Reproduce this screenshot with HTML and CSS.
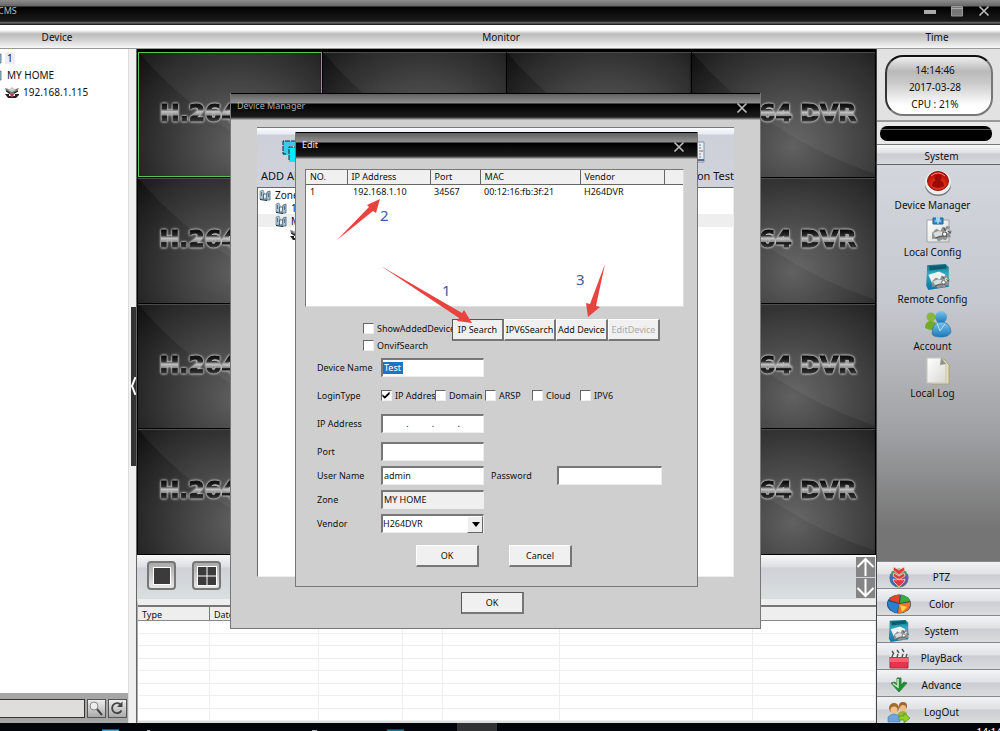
FILE: index.html
```html
<!DOCTYPE html>
<html lang="en">
<head>
<meta charset="utf-8">
<title>CMS</title>
<link rel="stylesheet" href="styles.css">
</head>
<body>
<svg class="defs" aria-hidden="true">
  <defs>
    <linearGradient id="chrome" x1="0" y1="0" x2="0" y2="1">
      <stop offset="0.2" stop-color="#0c0c0c"/><stop offset="0.36" stop-color="#2a2a2a"/>
      <stop offset="0.46" stop-color="#c4c4c4"/><stop offset="0.58" stop-color="#8a8a8a"/>
      <stop offset="0.62" stop-color="#141414"/><stop offset="0.8" stop-color="#3a3a3a"/>
    </linearGradient>
    <linearGradient id="teal" x1="0" y1="0" x2="0" y2="1">
      <stop offset="0" stop-color="#0f6f86"/><stop offset="0.35" stop-color="#2fa9bf"/><stop offset="1" stop-color="#1273a0"/>
    </linearGradient>
    <linearGradient id="blue" x1="0" y1="0" x2="0" y2="1">
      <stop offset="0" stop-color="#7cc4ea"/><stop offset="1" stop-color="#1c78b8"/>
    </linearGradient>
    <linearGradient id="paper" x1="0" y1="0" x2="1" y2="1">
      <stop offset="0" stop-color="#fff"/><stop offset="1" stop-color="#d8d8d2"/>
    </linearGradient>
    <radialGradient id="red" cx="0.5" cy="0.7" r="0.6">
      <stop offset="0" stop-color="#ff4a28"/><stop offset="1" stop-color="#b80c04"/>
    </radialGradient>
    <symbol id="x" viewBox="0 0 12 12"><path d="M1.5 1.5 10.500 10.500M10.500 1.500 1.500 10.500" stroke="#b9b9b9" stroke-width="1.700"/></symbol>
    <symbol id="gear" viewBox="0 0 20 16">
      <path d="M1 8 5 4 9 6 11 2 14 3 15 1 18 2 17 5 20 6 18 9 19 12 16 12 14 15 11 14 7 16 5 13 1 14Z" fill="#8f9193"/>
      <path d="M2 8 7 6 12 7 16 4 18 6 14 10 8 11 4 12Z" fill="#d9dbdc"/>
      <path d="M4 13 9 11 15 11M12 3 14 6M16 6 19 8" stroke="#4e5152" fill="none"/>
      <circle cx="13" cy="9" r="2" fill="#fff" stroke="#666"/>
    </symbol>
    <symbol id="system" viewBox="0 0 26 26">
      <path d="M3 2 20 1 23 4V22L4 25 2 21Z" fill="url(#teal)"/>
      <path d="M5 3 20 2 21 5 5 7Z" fill="#0b5d72"/>
      <path d="M4 11 14 8 20 11 21 17 8 20Z" fill="#eef2f3"/>
      <use href="#gear" x="6" y="10" width="19" height="14"/>
    </symbol>
    <symbol id="building" viewBox="0 0 12 12">
      <path d="M1 2 4 1 5 3V10H1Z" fill="#a9c3d2" stroke="#6a8799" stroke-width=".7"/>
      <path d="M4.500 5H8V10H4.500Z" fill="#e8f2f6" stroke="#344e5d" stroke-width=".8"/>
      <path d="M8 3 11 2V11H7Z" fill="#a3c2d4" stroke="#4a6678" stroke-width=".8"/>
      <path d="M2 4h1M2 6h1M9 5h1M9 7h1M1 10.500 8 11.500" stroke="#152c3a"/>
    </symbol>
    <symbol id="camera" viewBox="0 0 14 12">
      <path d="M0 2 7 4 14 2 12 6 9 8H4L1 5Z" fill="#777"/>
      <path d="M3 4 7 1 11 4 7 6Z" fill="#ccc"/><path d="M1 5 5 7M13 5 9 7" stroke="#111"/>
      <path d="M0 8H4V10H10V8H14V9L11 12H3Z" fill="#222"/><path d="M5 8H9L8 11H6Z" fill="#b84040"/>
    </symbol>
    <symbol id="dvr" viewBox="0 0 184 125">
      <path d="M0 0Q72 84 184 122V0Z" fill="#fff" opacity=".05"/>
      <text x="21" y="69" class="dvr-text">H.264 DVR</text>
    </symbol>
  </defs>
</svg>

<div class="app">
  <header class="titlebar main-title">
    <h1 class="app-name">CMS</h1>
    <div class="window-buttons">
      <button class="icon-button" aria-label="Minimize"><svg width="12" height="12"><path d="M0 5H12V9H0Z" fill="#aaa"/></svg></button>
      <button class="icon-button" aria-label="Maximize"><svg width="12" height="12"><path d="M.5 1.500H11.500V11H.5Z" fill="#777" stroke="#999"/><path d="M0 3.500H12" stroke="#aaa"/></svg></button>
      <button class="icon-button" aria-label="Close"><svg width="12" height="12"><use href="#x"/></svg></button>
    </div>
  </header>
  <div class="headings"><div class="h-device">Device</div><div class="h-monitor">Monitor</div><div class="h-time">Time</div></div>

  <div class="workspace">
    <aside class="devices">
      <ul class="tree">
        <li><svg class="i12"><use href="#building"/></svg><span class="picked">1</span></li>
        <li><svg class="i12"><use href="#building"/></svg><span>MY HOME</span></li>
        <li class="child"><svg class="i14"><use href="#camera"/></svg><span>192.168.1.115</span></li>
      </ul>
      <div class="finder">
        <input type="text" class="find-input" aria-label="Search devices">
        <button class="find-button" aria-label="Search"><svg width="16" height="16"><path d="M8.500 8.500 14 15" stroke="#444" stroke-width="2"/><circle cx="6" cy="6" r="4" fill="#eee" stroke="#888"/></svg></button>
        <button class="find-button" aria-label="Refresh"><svg width="16" height="16"><path d="M12 5A5 5 0 1 0 12.500 10.500" fill="none" stroke="#444" stroke-width="1.800"/><path d="M13.500 1.500V7H8Z" fill="#444"/></svg></button>
      </div>
    </aside>
    <div class="splitter"><button class="handle" aria-label="Collapse"><svg width="5" height="20"><path d="M4.500 1 1 10 4.500 19" fill="none" stroke="#fff" stroke-width="2"/></svg></button></div>

    <main class="monitor">
      <div class="videos">
        <div class="video active"><svg viewBox="0 0 184 125"><use href="#dvr"/></svg></div>
        <div class="video"><svg viewBox="0 0 184 125"><use href="#dvr"/></svg></div>
        <div class="video"><svg viewBox="0 0 184 125"><use href="#dvr"/></svg></div>
        <div class="video"><svg viewBox="0 0 184 125"><use href="#dvr"/></svg></div>
        <div class="video"><svg viewBox="0 0 184 125"><use href="#dvr"/></svg></div>
        <div class="video"><svg viewBox="0 0 184 125"><use href="#dvr"/></svg></div>
        <div class="video"><svg viewBox="0 0 184 125"><use href="#dvr"/></svg></div>
        <div class="video"><svg viewBox="0 0 184 125"><use href="#dvr"/></svg></div>
        <div class="video"><svg viewBox="0 0 184 125"><use href="#dvr"/></svg></div>
        <div class="video"><svg viewBox="0 0 184 125"><use href="#dvr"/></svg></div>
        <div class="video"><svg viewBox="0 0 184 125"><use href="#dvr"/></svg></div>
        <div class="video"><svg viewBox="0 0 184 125"><use href="#dvr"/></svg></div>
        <div class="video"><svg viewBox="0 0 184 125"><use href="#dvr"/></svg></div>
        <div class="video"><svg viewBox="0 0 184 125"><use href="#dvr"/></svg></div>
        <div class="video"><svg viewBox="0 0 184 125"><use href="#dvr"/></svg></div>
        <div class="video"><svg viewBox="0 0 184 125"><use href="#dvr"/></svg></div>
      </div>
      <div class="layoutbar">
        <button class="layout-button" aria-label="Single view"><svg width="20" height="20"><path d="M1 1H19V19H1Z" fill="#fff"/><path d="M2 2H18V18H2Z" fill="#3b3b3b"/></svg></button>
        <button class="layout-button" aria-label="Four views"><svg width="20" height="20"><path d="M0 0H20V20H0Z" fill="#fff"/><path d="M1 1H9.500V9.500H1ZM10.500 1H19V9.500H10.500ZM1 10.500H9.500V19H1ZM10.500 10.500H19V19H10.500Z" fill="#3b3b3b"/></svg></button>
        <div class="pager">
          <button class="page-button" aria-label="Previous page"><svg width="19" height="20"><path d="M9.500 2V19M1.500 10 9.500 2 17.500 10" fill="none" stroke="#fff" stroke-width="2"/></svg></button>
          <button class="page-button" aria-label="Next page"><svg width="19" height="20"><path d="M9.500 1V18M1.500 10 9.500 18 17.500 10" fill="none" stroke="#fff" stroke-width="2"/></svg></button>
        </div>
      </div>
      <table class="log">
        <colgroup><col class="c72"><col class="c109"><col class="c84"><col class="c40"><col class="c117"><col class="c193"><col></colgroup>
        <thead><tr><th>Type</th><th>Date</th><th></th><th></th><th></th><th></th><th></th></tr></thead>
        <tbody>
          <tr><td></td><td></td><td></td><td></td><td></td><td></td><td></td></tr>
          <tr><td></td><td></td><td></td><td></td><td></td><td></td><td></td></tr>
          <tr><td></td><td></td><td></td><td></td><td></td><td></td><td></td></tr>
          <tr><td></td><td></td><td></td><td></td><td></td><td></td><td></td></tr>
          <tr><td></td><td></td><td></td><td></td><td></td><td></td><td></td></tr>
          <tr><td></td><td></td><td></td><td></td><td></td><td></td><td></td></tr>
          <tr><td></td><td></td><td></td><td></td><td></td><td></td><td></td></tr>
          <tr><td></td><td></td><td></td><td></td><td></td><td></td><td></td></tr>
        </tbody>
      </table>
    </main>

    <aside class="side">
      <div class="clock-wrap"><div class="clock"><span>14:14:46</span><span>2017-03-28</span><span>CPU : 21%</span></div></div>
      <div class="pill-wrap"><div class="pill"></div></div>
      <h2 class="side-title">System</h2>
      <nav class="tools">
        <button class="tool"><svg width="28" height="28" viewBox="0 0 28 28"><ellipse cx="14" cy="16" rx="13" ry="11" fill="#77797c"/><ellipse cx="14" cy="13.500" rx="13" ry="12" fill="#eee"/><ellipse cx="14" cy="12" rx="10.500" ry="9.500" fill="url(#red)" stroke="#8c1610"/><circle cx="14" cy="8.500" r="3.500" fill="#9c0b05"/><path d="M8 17Q8 11 14 11T20 17Q14 21 8 17Z" fill="#9c0b05"/><path d="M7 7Q14 1 21 7" fill="none" stroke="#ef8d7d"/></svg>Device Manager</button>
        <button class="tool"><svg width="28" height="28" viewBox="0 0 28 28"><path d="M3 4H25V26H3Z" fill="url(#paper)" stroke="#a1a4a8"/><path d="M9 2H19V8H9Z" fill="#3d8cc8" stroke="#1c5e92"/><path d="M12 1H16V4H12Z" fill="#9bd4ef"/><path d="M11 5H17M14 3V8" stroke="#d1efff"/><use href="#gear" x="7" y="8" width="21" height="18"/></svg>Local Config</button>
        <button class="tool"><svg width="28" height="28"><use href="#system"/></svg>Remote Config</button>
        <button class="tool"><svg width="28" height="28" viewBox="0 0 28 28"><circle cx="7" cy="7" r="4.500" fill="#8ab739"/><path d="M1 18Q1 11 7 11T13 18Q8 22 1 18Z" fill="#72aa2c"/><circle cx="17" cy="7" r="6" fill="url(#blue)"/><path d="M8 24Q8 12 17 12T27 22Q25 27 17 27T8 24Z" fill="url(#blue)" stroke="#256f9d" stroke-width=".6"/><path d="M13 13 16 21 21 14" fill="none" stroke="#b8e4fa"/></svg>Account</button>
        <button class="tool"><svg width="28" height="28" viewBox="0 0 28 28"><path d="M7 2H20L25 8V27H7Z" fill="#e5e2b2" stroke="#a6a278"/><path d="M3 1H17L22 7V26H3Z" fill="url(#paper)" stroke="#c6c6bb"/><path d="M17 1 16 8 22 7Z" fill="#929285"/></svg>Local Log</button>
      </nav>
      <nav class="menu">
        <button class="menu-item"><svg class="i24" viewBox="0 0 24 24"><circle cx="12" cy="13" r="9.500" fill="#4a9a64"/><path d="M3 9Q1 18 9 22L12 13Z" fill="#3d6fb0"/><path d="M21 9Q23 18 15 22L12 13Z" fill="#6f5aa0"/><path d="M7 2 12 5 17 2 18 5 12 10 6 5ZM7 8 12 11 17 8 18 11 12 15 6 11ZM6 14 9 15 12 14 15 15 18 14 17 17 12 22 7 17Z" fill="#e33b38" stroke="#fbd0c8" stroke-width=".8"/></svg><span>PTZ</span></button>
        <button class="menu-item"><svg class="i24" viewBox="0 0 24 24"><ellipse cx="12" cy="12" rx="12" ry="9.500" fill="#264a6c"/><path d="M12 11 2 8Q5 3 13 2.500Z" fill="#e54427"/><path d="M14 2.500Q20 3 23 9L13 11Z" fill="#35ae35"/><path d="M1 9 12 12 10 21Q0 19 1 9Z" fill="#2c7fd0"/><path d="M12 12 23.500 10Q24 20 11 21.500Z" fill="#f0761e"/><path d="M13 13 20 15 15 20Z" fill="#ffd646"/></svg><span>Color</span></button>
        <button class="menu-item"><svg class="i24"><use href="#system"/></svg><span>System</span></button>
        <button class="menu-item"><svg class="i24" viewBox="0 0 24 24"><path d="M3 11H21V22H3Z" fill="#e5344c" stroke="#b5273b"/><path d="M3 12H21V16H3Z" fill="#ee6474"/><path d="M2 5 20 2 21 6 3 9ZM3 8H21V11H3Z" fill="#eee"/><path d="M5 5 7 8M10 4 12 7M15 3 17 6M6 8 5 11M11 8 10 11M16 8 15 11M20 8 19 11" stroke="#555" stroke-width="1.500"/></svg><span>PlayBack</span></button>
        <button class="menu-item"><svg class="i24" viewBox="0 0 24 24"><path d="M4 10 8 9 10 12V5H14V12L17 9 20 10 12 19Z" fill="#16952a" stroke="#4a7a50"/><path d="M11 6V14L6 10.500" fill="none" stroke="#caf3c8" stroke-width="1.500"/></svg><span>Advance</span></button>
        <button class="menu-item"><svg class="i24" viewBox="0 0 24 24"><circle cx="16" cy="6" r="4" fill="#9f652e"/><circle cx="16" cy="8" r="3" fill="#efbc83"/><path d="M11 20V13Q16 9 20 13V20Z" fill="#9ab63b"/><circle cx="7" cy="8" r="5" fill="#a56a2f"/><circle cx="7" cy="10" r="3.500" fill="#f1c28d"/><path d="M1 22V17Q7 11 13 17V22Z" fill="#6fa5da" stroke="#3f74ab" stroke-width=".6"/><path d="M12 16H17V13L23 18 17 23V20H12Z" fill="#8dd22c" stroke="#568d18" stroke-width=".7"/></svg><span>LogOut</span></button>
      </nav>
    </aside>
  </div>
  <footer class="taskbar"><svg class="task-icons" viewBox="0 0 500 8"><path d="M102 6.500H119V8H102Z" fill="#48a6d8"/><path d="M147 7H150V8H147ZM312 7H317V8H312Z" fill="#aaa"/><path d="M387 6.500H404V8H387Z" fill="#167aa0"/><path d="M457 0H497V8H457Z" fill="#303234"/></svg><span class="task-time">14:14</span></footer>
</div>

<section class="window manager" aria-label="Device Manager">
  <header class="titlebar"><h2 class="window-name dim">Device Manager</h2><button class="icon-button" aria-label="Close Device Manager"><svg width="12" height="12"><use href="#x"/></svg></button></header>
  <div class="manager-body">
    <div class="manager-tools">
      <button class="manager-tool"><svg width="24" height="24"><path d="M1 1H15V6H8V15H1Z" fill="#3fc8ee"/><path d="M7 7H22V22H7Z" fill="#00ecff"/><path d="M14 1H1V14H5M7 20V7H22" fill="none" stroke="#123" stroke-dasharray="5 1"/></svg>ADD AREA</button>
      <button class="manager-tool"><svg width="24" height="24"><path d="M2 2H17V22H2Z" fill="#e9edf3" stroke="#8093a8"/><path d="M13 4V18" stroke="#65839b" stroke-dasharray="2 1"/><path d="M14 11H16" stroke="#c33"/><path d="M3 20H17" stroke="#668" stroke-width="2"/></svg>Connection Test</button>
    </div>
    <ul class="zone-tree">
      <li><svg class="i12"><use href="#building"/></svg>Zone</li>
      <li class="l2"><svg class="i12"><use href="#building"/></svg>1</li>
      <li class="l2 picked-row"><svg class="i12"><use href="#building"/></svg>MY HOME</li>
      <li class="l3"><svg class="i14"><use href="#camera"/></svg></li>
    </ul>
    <button class="push default wide">OK</button>
  </div>
</section>

<section class="window edit" aria-label="Edit">
  <header class="titlebar"><h2 class="window-name">Edit</h2><button class="icon-button" aria-label="Close Edit"><svg width="12" height="12"><use href="#x"/></svg></button></header>
  <form class="edit-body">
    <div class="results">
      <table class="result-table">
        <colgroup><col class="c42"><col class="c83"><col class="c50"><col class="c100"><col class="c84"><col></colgroup>
        <thead><tr><th>NO.</th><th>IP Address</th><th>Port</th><th>MAC</th><th>Vendor</th><th></th></tr></thead>
        <tbody><tr><td>1</td><td>192.168.1.10</td><td>34567</td><td>00:12:16:fb:3f:21</td><td>H264DVR</td><td></td></tr></tbody>
      </table>
    </div>
    <div class="search-row">
      <div class="search-checks">
        <label class="check"><input type="checkbox">ShowAddedDevice</label>
        <label class="check"><input type="checkbox">OnvifSearch</label>
      </div>
      <div class="search-buttons">
        <button type="button" class="push default">IP Search</button><button type="button" class="push">IPV6Search</button><button type="button" class="push">Add Device</button><button type="button" class="push" disabled>EditDevice</button>
      </div>
    </div>
    <div class="fields">
      <div class="row"><label class="name" for="dn">Device Name</label><div class="box"><input id="dn" type="text" class="selected" value="Test"></div></div>
      <div class="row spaced"><span class="name">LoginType</span>
        <div class="types">
          <label class="check"><input type="checkbox" checked>IP Address</label>
          <label class="check"><input type="checkbox">Domain</label>
          <label class="check"><input type="checkbox">ARSP</label>
          <label class="check"><input type="checkbox">Cloud</label>
          <label class="check"><input type="checkbox">IPV6</label>
        </div>
      </div>
      <div class="row spaced"><label class="name" for="ip1">IP Address</label><div class="box octets"><input id="ip1" type="text">.<input type="text" aria-label="Octet 2">.<input type="text" aria-label="Octet 3">.<input type="text" aria-label="Octet 4"></div></div>
      <div class="row spaced"><label class="name" for="port">Port</label><div class="box"><input id="port" type="text"></div></div>
      <div class="row"><label class="name" for="user">User Name</label><div class="box"><input id="user" type="text" value="admin"></div><label class="pass-name" for="pass">Password</label><div class="box"><input id="pass" type="password"></div></div>
      <div class="row"><label class="name" for="zone">Zone</label><div class="box readonly"><input id="zone" type="text" value="MY HOME" readonly></div></div>
      <div class="row"><label class="name" for="vendor">Vendor</label><div class="box pick"><select id="vendor"><option>H264DVR</option></select></div></div>
    </div>
    <div class="actions"><button type="button" class="push wide">OK</button><button type="button" class="push wide">Cancel</button></div>
  </form>
  <div class="notes">
    <svg width="403" height="200" aria-hidden="true"><g fill="#e8433f"><path d="M41 108 73 75 71 73 84 67 80 81 77 79Z"/><path d="M85 134 166 181 168 178 176 191 161 189 163 186Z"/><path d="M309 132 300 174 304 175 292 185 290 171 294 172Z"/></g></svg>
    <span class="note n1">1</span><span class="note n2">2</span><span class="note n3">3</span>
  </div>
</section>
</body>
</html>
```
FILE: styles.css
```css
* { box-sizing: border-box; }
html, body { height: 100%; }
body { margin: 0; overflow: hidden; font: 10px/12px "Noto Sans", "Open Sans", sans-serif; color: #111; background: #fff; }
h1, h2, ul { margin: 0; padding: 0; font-size: inherit; font-weight: normal; list-style: none; }
button, input, select { font: inherit; color: inherit; margin: 0; padding: 0; border: 0; background: none; border-radius: 0; outline: 0; }
svg { display: block; flex: none; }
.defs { position: absolute; width: 0; height: 0; }
.i12 { width: 12px; height: 12px; }
.i14 { width: 14px; height: 12px; }
.i24 { width: 24px; height: 24px; }

.app { display: flex; flex-direction: column; height: 100vh; overflow: hidden; }
.titlebar { display: flex; align-items: center; justify-content: space-between; height: 27px; flex: none; background: linear-gradient(#000 0 1px, #606060 1px, #909090 10px, #000 11px, #1c1c1c 24px, #888 26px, #cacaca); }
.main-title { height: 25px; background: linear-gradient(#8c8c8c, #666 6px, #000 7px, #1b1b1b 21px, #777 23px, #222 24px); }
.app-name { color: #bbb; margin-left: -2px; padding-bottom: 4px; font-size: 9px; }
.window-buttons { display: flex; gap: 15px; padding: 0 10px 3px 0; }
.icon-button { display: block; }
.headings { display: flex; height: 24px; flex: none; align-items: center; padding-bottom: 1px; text-align: center; background: linear-gradient(#fff 0 5px, #bbb 9px, #d6d6d6 16px, #f8f8f8 23px, #999 23px); }
.h-device { width: 114px; }
.h-monitor { flex: 1; padding-left: 14px; }
.h-time { width: 126px; }
.workspace { display: flex; flex: 1; min-height: 0; }

.devices { width: 128px; display: flex; flex-direction: column; overflow: hidden; background: #fff; }
.tree { flex: 1; margin-left: -10px; }
.tree li { display: flex; align-items: center; gap: 3px; height: 17px; }
.tree li span { padding: 0 2px; }
.tree .child { padding-left: 15px; }
.tree .child span { padding-left: 1px; }
.picked { background: #eee; }
.finder { display: flex; align-items: center; gap: 2px; height: 30px; padding: 0 1px 0 0; background: #a6a6a6; }
.find-input { flex: 1; min-width: 0; height: 19px; background: #dfdddc; border: 1px solid #333; border-left: 0; }
.find-button { width: 19px; height: 19px; border: 1px solid #555; background: linear-gradient(#eee, #aaa); }
.splitter { width: 9px; flex: none; display: flex; align-items: center; padding-left: 2px; background: #efefef; border-left: 1px solid #ddd; border-right: 1px solid #666; }
.handle { width: 5px; height: 159px; background: #333; }

.monitor { flex: 1; min-width: 0; display: flex; flex-direction: column; }
.videos { flex: 1; min-height: 0; display: grid; grid-template: repeat(4, 1fr) / repeat(4, 1fr); gap: 1px; padding: 3px 1px 1px; background: #000; }
.video { min-height: 0; overflow: hidden; background: radial-gradient(ellipse at 55% 75%, #616161, #414141 40%, #1c1c1c 85%, #0e0e0e); border-top: 1px solid #4c4c4c; }
.video svg { width: 100%; height: 100%; }
.video.active { border: 1px solid #5cc455; }
.dvr-text { font: bold 24px "DejaVu Sans", sans-serif; fill: url(#chrome); stroke: url(#chrome); stroke-width: 1px; filter: drop-shadow(0 0 1px #ddd) drop-shadow(0 0 1px #aaa); }
.layoutbar { display: flex; align-items: flex-start; gap: 16px; height: 44px; flex: none; padding: 6px 0 0 10px; background: linear-gradient(#f8f8f8, #dcdee2 12px, #cfd1d7 13px, #d9dfdf); }
.layout-button { width: 29px; height: 29px; display: grid; place-items: center; border: 2px solid #777; border-radius: 4px; background: linear-gradient(#aaa, #e8e8e8); }
.pager { display: grid; gap: 1px; margin: -4px 1px 0 auto; }
.page-button { width: 19px; height: 20px; background: #858585; }
.log { width: 100%; height: 124px; flex: none; border-collapse: separate; border-spacing: 0; table-layout: fixed; border-top: 6px solid #eee; border-left: 1px solid #aaa; background: #fff; box-shadow: inset 0 2px #777; border-bottom: 2px solid #ddd; }
.log th { height: 16px; padding: 2px 0 0 4px; font-size: 9px; line-height: 11px; font-weight: normal; text-align: left; background: #eee; border-top: 2px solid #777; border-bottom: 1px solid #888; }
.log th:first-child { border-right: 1px solid #777; }
.log td { padding: 0; border-bottom: 1px solid #eee; border-right: 1px solid #eee; }
.c72 { width: 72px; } .c109 { width: 109px; } .c84 { width: 84px; } .c40 { width: 40px; } .c117 { width: 117px; } .c193 { width: 193px; }
.c42 { width: 41px; } .c83 { width: 83px; } .c50 { width: 50px; } .c100 { width: 100px; }

.side { width: 124px; flex: none; display: flex; flex-direction: column; border-left: 1px solid #444; }
.clock-wrap { height: 73px; flex: none; padding: 6px 7px 6px 8px; background: #e2e2e2; border-bottom: 2px solid #999; }
.clock { height: 61px; display: flex; flex-direction: column; align-items: center; justify-content: center; padding: 4px 8px 0 0; line-height: 17px; border: 2px solid; border-color: #111 #777 #777 #333; border-radius: 18px; background: linear-gradient(#eee, #b9b9b9 25%, #c9c9c9 45%, #fff 85%); }
.pill-wrap { height: 23px; flex: none; padding: 4px 8px 0 3px; background: #e8e8e8; border-bottom: 1px solid #777; }
.pill { height: 15px; border-radius: 7px; background: linear-gradient(#000 3px, #555 3px 4px, #000 4px); }
.side-title { height: 20px; flex: none; padding: 5px 0 0 6px; text-align: center; background: linear-gradient(#fafafa, #dddfe3 8px, #c9cbd1 9px, #d8dade); border-bottom: 1px solid #666; }
.tools { flex: 1; min-height: 0; display: flex; flex-direction: column; align-items: center; gap: 5px; padding: 4px 12px 0 0; background: linear-gradient(#d3d6dd, #c5c8ce 35%, #9fa0a3 68%, #757575 92%); }
.tool { display: flex; flex-direction: column; align-items: center; gap: 2px; height: 42px; font-size: 10px; }
.tool svg { margin-left: 11px; }
.menu { flex: none; }
.menu-item { display: grid; grid-template-columns: 24px 1fr; align-items: center; width: 100%; height: 27px; padding: 3px 28px 0 10px; text-align: center; background: linear-gradient(#f2f3f4, #dfe1e5 12px, #cbcdd3 13px, #dadddf); border-top: 1px solid #888; }
.menu-item span { white-space: nowrap; }
.taskbar { display: flex; justify-content: space-between; height: 8px; flex: none; overflow: hidden; background: #02060b; }
.task-icons { width: 500px; height: 8px; }
.task-time { color: #fff; padding-top: 3px; margin-right: -2px; }

.window { position: absolute; display: flex; flex-direction: column; background: #cfcfcf; border: 1px solid #777; border-top: 0; }
.window .titlebar { padding: 2px 12px 0 6px; }
.window-name { color: #eee; padding-bottom: 3px; font-size: 9px; }
.dim { color: #aaa; }
.manager { left: 230px; top: 93px; width: 531px; }
.manager-body { display: flex; flex-direction: column; align-items: center; padding: 7px 26px 14px; }
.manager-tools { align-self: stretch; display: flex; justify-content: space-between; height: 60px; padding-left: 4px; font-size: 11px; background: linear-gradient(#fafbff, #e8ebf2 6px, #cdd0d9 7px, #d1d3dc); border-top: 1px solid #777; }
.manager-tool { display: flex; flex-direction: column; align-items: center; gap: 6px; padding-top: 12px; }
.manager-tool svg { margin-left: 13px; }
.zone-tree { align-self: stretch; height: 390px; background: #fff; border: 1px solid #777; border-color: #666 #eee #eee #666; }
.zone-tree li { display: flex; align-items: center; gap: 4px; height: 13px; padding-left: 1px; }
.zone-tree .l2 { padding-left: 17px; }
.zone-tree .l3 { padding-left: 32px; }
.picked-row { background: #eee; }
.manager .wide { margin: 15px 6px 0 0; }

.edit { left: 295px; top: 132px; width: 403px; }
.edit-body { padding: 10px 13px 19px 9px; }
.results { height: 138px; background: #fff; border: 1px solid #777; border-right-color: #ddd; border-bottom-color: #ddd; }
.result-table { width: 100%; table-layout: fixed; border-collapse: collapse; font-size: 9px; }
.result-table th, .result-table td { padding: 1px 0 0 4px; height: 14px; font-weight: normal; text-align: left; white-space: nowrap; }
.result-table th { background: #f0f0f0; border-right: 1px solid #666; border-bottom: 1px solid #666; }
.result-table th:last-child { border-right: 0; }
.result-table td:nth-child(2) { padding-left: 6px; }
.search-row { display: flex; justify-content: flex-end; height: 32px; margin: 12px 24px 6px 0; }
.search-checks { width: 89px; padding-top: 1px; }
.check { display: flex; align-items: center; gap: 3px; height: 17px; font-size: 9px; white-space: nowrap; }
.check input { appearance: none; flex: none; width: 11px; height: 11px; background: #fff; border: 1px solid #eee; border-top-color: #666; border-left-color: #666; }
.check input:checked::before { content: ""; display: block; width: 8px; height: 8px; background: #000; clip-path: polygon(5% 40%, 35% 65%, 95% 5%, 95% 40%, 35% 98%, 5% 70%); }
.search-buttons { display: flex; }
.push { width: 52px; height: 22px; font-size: 9px; line-height: 12px; text-align: center; white-space: nowrap; background: #f0f0f0; border: 1px solid #fff; border-right: 2px solid #777; border-bottom: 2px solid #777; }
.push:disabled { color: #aaa; }
.default { border-top-color: #555; border-left-color: #555; }
.wide { width: 63px; }
.fields { display: flex; flex-direction: column; gap: 5px; padding: 1px 0 0 12px; }
.row { display: flex; align-items: center; height: 19px; font-size: 9px; }
.spaced { margin-top: 4px; }
.name { width: 64px; }
.box { display: flex; align-items: center; width: 103px; height: 19px; background: #fff; border: 1px solid #eee; border-top: 2px solid #777; border-left: 2px solid #777; }
.box input { width: 100%; min-width: 0; padding-left: 1px; }
.box .selected { width: 20px; color: #fff; background: #1b74c8; }
.box.octets input { width: 24px; padding: 0; }
.readonly { background: #efefef; }
.types { display: grid; grid-template-columns: 54px 50px 47px 48px auto; }
.pass-name { width: 73px; padding-left: 7px; }
.pass-name + .box { width: 105px; }
.pick { position: relative; }
.pick select { appearance: none; width: 100%; height: 100%; }
.pick::before { content: ""; position: absolute; right: 0; top: 0; width: 14px; height: 15px; pointer-events: none; background: #eee; border: 1px solid #fff; border-right-color: #666; border-bottom-color: #666; }
.pick::after { content: ""; position: absolute; right: 3px; top: 6px; border: 4px solid transparent; border-top: 5px solid #000; border-bottom: 0; pointer-events: none; }
.actions { display: flex; gap: 30px; padding: 12px 0 0 111px; }
.notes { position: absolute; left: 0; top: 0; pointer-events: none; }
.note { position: absolute; font-size: 15px; line-height: 18px; color: #3a5ba8; }
.n1 { left: 146px; top: 149px; }
.n2 { left: 84px; top: 74px; }
.n3 { left: 280px; top: 138px; }
```
